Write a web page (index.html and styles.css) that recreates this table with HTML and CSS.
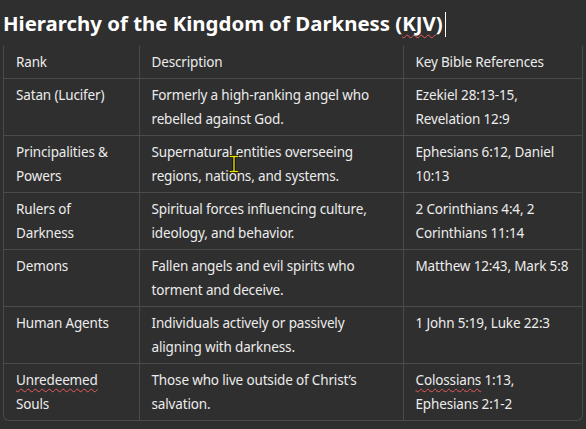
FILE: index.html
```html
<!DOCTYPE html>
<html>
<head>
<meta charset="utf-8">
<link rel="stylesheet" href="styles.css">
</head>
<body>
<div class="page">
  <h1 class="title">Hierarchy of the Kingdom of Darkness (<span class="spell">KJV</span>)<span class="caret"></span></h1>
  <div class="table-wrap">
    <table class="grid">
      <colgroup><col class="c1"><col class="c2"><col class="c3"></colgroup>
      <thead>
        <tr><th>Rank</th><th>Description</th><th>Key Bible References</th></tr>
      </thead>
      <tbody>
        <tr><td>Satan (Lucifer)</td><td>Formerly a high-ranking angel who rebelled against God.</td><td>Ezekiel 28:13-15, Revelation 12:9</td></tr>
        <tr><td>Principalities &amp; Powers</td><td>Supernatural entities overseeing regions, nations, and systems.</td><td>Ephesians 6:12, Daniel 10:13</td></tr>
        <tr><td>Rulers of Darkness</td><td>Spiritual forces influencing culture, ideology, and behavior.</td><td>2 Corinthians 4:4, 2 Corinthians 11:14</td></tr>
        <tr><td>Demons</td><td>Fallen angels and evil spirits who torment and deceive.</td><td>Matthew 12:43, Mark 5:8</td></tr>
        <tr><td>Human Agents</td><td>Individuals actively or passively aligning with darkness.</td><td>1 John 5:19, Luke 22:3</td></tr>
        <tr><td><span class="spell">Unredeemed</span> Souls</td><td>Those who live outside of Christ’s salvation.</td><td><span class="spell">Colossians</span> 1:13, Ephesians 2:1-2</td></tr>
      </tbody>
    </table>
  </div>
  <svg class="ibeam" width="12" height="18" viewBox="0 0 12 18">
    <path d="M1 1.5 H11 M6 1.5 V16.5 M1 16.5 H11" stroke="#000" stroke-width="3" fill="none"/>
    <path d="M1.5 1.5 H10.5 M6 1.5 V16.5 M1.5 16.5 H10.5" stroke="#e8e000" stroke-width="1.4" fill="none"/>
  </svg>
</div>
</body>
</html>
```

FILE: styles.css
```css
html, body {
  margin: 0;
  padding: 0;
  background: #2f2f2f;
}
body {
  font-family: "Noto Sans", "Open Sans", sans-serif;
  color: #ececec;
}
.page {
  position: relative;
  width: 586px;
  height: 429px;
  padding: 0 3px;
  box-sizing: border-box;
  overflow: hidden;
}
.title {
  margin: 0;
  height: 46px;
  padding-top: 9px;
  box-sizing: border-box;
  font-size: 20.4px;
  line-height: 28px;
  font-weight: 700;
  color: #ffffff;
  white-space: nowrap;
}
.spell {
  text-decoration: underline wavy #e65c5c;
  text-decoration-thickness: 1px;
  text-underline-offset: 3px;
  text-decoration-skip-ink: none;
}
.caret {
  display: inline-block;
  width: 1px;
  height: 25px;
  background: #ffffff;
  vertical-align: -6px;
  margin-left: 2px;
}
.table-wrap {
  width: 580px;
  border: 1px solid #4b4b4b;
  border-top: none;
  border-radius: 0 0 6px 6px;
  overflow: hidden;
  box-sizing: border-box;
}
.grid {
  border-collapse: collapse;
  width: 100%;
  table-layout: fixed;
  font-size: 13.5px;
  letter-spacing: -0.15px;
  line-height: 24px;
}
.c1 { width: 135px; }
.c2 { width: 264px; }
.c3 { width: auto; }
.grid th, .grid td {
  text-align: left;
  font-weight: 400;
  vertical-align: top;
  padding: 4px 12px;
  border-left: 1px solid #4b4b4b;
  border-top: 1px solid #4b4b4b;
}
.grid th { border-top: none; }
.grid th:first-child, .grid td:first-child { border-left: none; }
.ibeam {
  position: absolute;
  left: 228px;
  top: 155px;
}
```
